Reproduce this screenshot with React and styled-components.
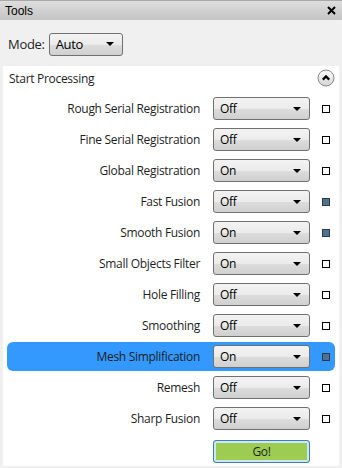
import styled, { createGlobalStyle } from "styled-components"

const GlobalStyle = createGlobalStyle`
  html, body { margin: 0; padding: 0; }
  body {
    width: 342px;
    height: 468px;
    overflow: hidden;
    background: #f0f0f0;
    font-family: "Open Sans", "Noto Sans", "Liberation Sans", sans-serif;
    font-size: 12px;
    letter-spacing: -0.3px;
    color: #1e1e1e;
  }
`

const Window = styled.div`
  display: flex;
  flex-direction: column;
  width: 342px;
  height: 468px;
  background: #f0f0f0;
`

const TitleBar = styled.div`
  display: flex;
  align-items: center;
  justify-content: space-between;
  height: 19px;
  padding: 0 6px 0 5px;
  border-top: 1px solid #a9a9a9;
  background: linear-gradient(#dedede, #c4c4c4);
  font-family: "Liberation Sans", Arial, sans-serif;
  font-size: 12px;
  letter-spacing: 0;
  color: #000;
`

const ModeRow = styled.div`
  display: flex;
  align-items: center;
  gap: 4px;
  height: 22px;
  margin: 13px 0 11px 8px;
  font-size: 13px;
`

const Select = styled.div`
  box-sizing: border-box;
  display: flex;
  align-items: center;
  justify-content: space-between;
  width: ${(p) => p.width}px;
  height: 23px;
  padding: 0 8px 0 6px;
  border: 1px solid #707070;
  border-radius: 3px;
  background: linear-gradient(#f3f3f3 0%, #ebebeb 50%, #dddddd 51%, #d0d0d0 100%);
  font-size: ${(p) => p.size || 12}px;
  color: #000;
`

const Arrow = styled.span`
  width: 0;
  height: 0;
  border-left: 4px solid transparent;
  border-right: 4px solid transparent;
  border-top: 4px solid #000;
`

const Panel = styled.div`
  display: flex;
  flex-direction: column;
  margin: 0 3px 2px 3px;
  flex: 1;
  background: #fff;
`

const PanelHeader = styled.div`
  display: flex;
  align-items: center;
  justify-content: space-between;
  height: 22px;
  padding: 0 4px 0 6px;
  margin-top: 1px;
  font-size: 12px;
`

const Rows = styled.div`
  display: flex;
  flex-direction: column;
  gap: 8px;
  padding: 8px 4px 0 4px;
`

const Row = styled.div`
  display: grid;
  grid-template-columns: 206px 97px 25px;
  align-items: center;
  height: 23px;
  padding: 3px 0;
  margin: -3px 0;
  border-radius: 6px;
  background: ${(p) => (p.active ? "#3399ff" : "transparent")};
`

const Label = styled.span`
  text-align: right;
  padding-right: 13px;
  white-space: nowrap;
`

const Check = styled.span`
  justify-self: start;
  box-sizing: border-box;
  width: 8px;
  height: 8px;
  margin-left: 12px;
  border: 1px solid ${(p) => (p.filled ? "#2b3a46" : "#000")};
  background: ${(p) => (p.filled ? "#4f7191" : "#fff")};
`

const GoRow = styled.div`
  display: flex;
  padding: 10px 0 0 210px;
`

const GoButton = styled.div`
  box-sizing: border-box;
  display: flex;
  align-items: center;
  justify-content: center;
  width: 97px;
  height: 23px;
  border: 1px solid #3c7fb1;
  border-radius: 3px;
  background: #9ccc52;
  box-shadow: inset 0 0 0 2px #cde6f7;
  font-size: 12px;
`

const rows = [
  ["Rough Serial Registration", "Off", false],
  ["Fine Serial Registration", "Off", false],
  ["Global Registration", "On", false],
  ["Fast Fusion", "Off", true],
  ["Smooth Fusion", "On", true],
  ["Small Objects Filter", "On", false],
  ["Hole Filling", "Off", false],
  ["Smoothing", "Off", false],
  ["Mesh Simplification", "On", true],
  ["Remesh", "Off", false],
  ["Sharp Fusion", "Off", false],
]

function CollapseIcon() {
  return (
    <svg width="18" height="18" viewBox="0 0 18 18">
      <defs>
        <linearGradient id="cg" x1="0" y1="0" x2="0" y2="1">
          <stop offset="0" stopColor="#ffffff" />
          <stop offset="1" stopColor="#d4d4d4" />
        </linearGradient>
      </defs>
      <circle cx="9" cy="9" r="8" fill="url(#cg)" stroke="#8a8a8a" />
      <path d="M5.8 10.6 L9 7.4 L12.2 10.6" fill="none" stroke="#000" strokeWidth="2.2" />
    </svg>
  )
}

function CloseIcon() {
  return (
    <svg width="9" height="9" viewBox="0 0 9 9">
      <path d="M1 1 L8 8 M8 1 L1 8" stroke="#000" strokeWidth="2" />
    </svg>
  )
}

export default function App() {
  return (
    <>
      <GlobalStyle />
      <Window>
        <TitleBar>
          <span>Tools</span>
          <CloseIcon />
        </TitleBar>
        <ModeRow>
          <span>Mode:</span>
          <Select width={74} size={13}>
            <span>Auto</span>
            <Arrow />
          </Select>
        </ModeRow>
        <Panel>
          <PanelHeader>
            <span>Start Processing</span>
            <CollapseIcon />
          </PanelHeader>
          <Rows>
            {rows.map(([name, value, filled]) => (
              <Row key={name} active={name === "Mesh Simplification"}>
                <Label>{name}</Label>
                <Select width={97}>
                  <span>{value}</span>
                  <Arrow />
                </Select>
                <Check filled={filled} />
              </Row>
            ))}
          </Rows>
          <GoRow>
            <GoButton>Go!</GoButton>
          </GoRow>
        </Panel>
      </Window>
    </>
  )
}
